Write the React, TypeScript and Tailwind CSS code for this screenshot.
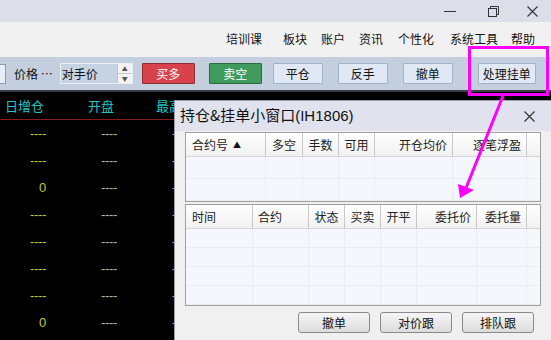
import React from 'react'

const font = { fontFamily: '"Noto Sans CJK SC", "Liberation Sans", sans-serif' }

type Col = { label: string; w: number; align: 'left' | 'right' | 'center'; arrow?: boolean }

const posCols: Col[] = [
  { label: '合约号', w: 79, align: 'left', arrow: true },
  { label: '多空', w: 37, align: 'center' },
  { label: '手数', w: 36, align: 'center' },
  { label: '可用', w: 36, align: 'center' },
  { label: '开仓均价', w: 78, align: 'right' },
  { label: '逐笔浮盈', w: 74, align: 'right' },
]

const orderCols: Col[] = [
  { label: '时间', w: 66, align: 'left' },
  { label: '合约', w: 56, align: 'left' },
  { label: '状态', w: 36, align: 'center' },
  { label: '买卖', w: 36, align: 'center' },
  { label: '开平', w: 36, align: 'center' },
  { label: '委托价', w: 60, align: 'right' },
  { label: '委托量', w: 50, align: 'right' },
]

const rows = [
  { a: '----', b: '----' },
  { a: '----', b: '----' },
  { a: '0', b: '----' },
  { a: '----', b: '----' },
  { a: '----', b: '----' },
  { a: '----', b: '----' },
  { a: '----', b: '----' },
  { a: '0', b: '----' },
]

function Grid({ cols, height, bodyRows }: { cols: Col[]; height: number; bodyRows: number }) {
  return (
    <div className="mx-[10px] border border-[#a0a0a0] bg-[#f4f8fc] flex flex-col overflow-hidden" style={{ height }}>
      <div className="flex h-[24px] shrink-0 bg-gradient-to-b from-white to-[#f1f1f1] border-b border-[#d5d5d5]">
        <div className="w-[1px]" />
        {cols.map((c) => (
          <div
            key={c.label}
            className={
              'flex items-center whitespace-nowrap px-[5px] text-[12px] text-[#222] border-r border-[#c8c8c8] ' +
              (c.align === 'left' ? 'justify-start' : c.align === 'right' ? 'justify-end' : 'justify-center')
            }
            style={{ width: c.w }}
          >
            {c.label}
            {c.arrow && <span className="ml-[5px] text-[8px] text-[#111]">▲</span>}
          </div>
        ))}
      </div>
      <div className="flex-1 flex flex-col">
        {Array.from({ length: bodyRows }).map((_, i) => (
          <div key={i} className="flex flex-1 border-b border-[#e6edf4]">
            <div className="w-[1px]" />
            {cols.map((c) => (
              <div key={c.label} className="border-r border-[#e6edf4]" style={{ width: c.w }} />
            ))}
          </div>
        ))}
      </div>
    </div>
  )
}

function ToolBtn({ label, w, cls }: { label: string; w: number; cls: string }) {
  return (
    <div
      className={'h-[21px] flex items-center justify-center text-[12px] border rounded-[1px] ' + cls}
      style={{ width: w }}
    >
      {label}
    </div>
  )
}

function DlgBtn({ label }: { label: string }) {
  return (
    <div className="w-[72px] h-[21px] flex items-center justify-center text-[12px] text-[#111] border border-[#8a8a8a] rounded-[3px] bg-gradient-to-b from-[#f6f6f6] to-[#dcdcdc]">
      {label}
    </div>
  )
}

export default function App() {
  return (
    <div className="w-[551px] h-[340px] relative overflow-hidden flex flex-col bg-black" style={font}>
      {/* title bar */}
      <div className="h-[22px] bg-[#dcdfea] flex items-center justify-end text-[#222]">
        <div className="w-[12px] h-[1px] bg-[#333] mr-[32px]" />
        <svg width="11" height="11" viewBox="0 0 11 11" className="mr-[28px]">
          <rect x="0.5" y="2.5" width="8" height="8" fill="none" stroke="#333" />
          <path d="M2.5 2.5V0.5H10.5V8.5H8.5" fill="none" stroke="#333" />
        </svg>
        <svg width="11" height="11" viewBox="0 0 11 11" className="mr-[13px]">
          <path d="M0.5 0.5L10.5 10.5M10.5 0.5L0.5 10.5" stroke="#333" strokeWidth="1.1" />
        </svg>
      </div>

      {/* menu bar */}
      <div className="h-[35px] bg-[#f1f1f1] flex items-center text-[12px] text-[#111] pb-[2px]">
        <span className="ml-[226px]">培训课</span>
        <span className="ml-[21px]">板块</span>
        <span className="ml-[14px]">账户</span>
        <span className="ml-[14px]">资讯</span>
        <span className="ml-[15px]">个性化</span>
        <span className="ml-[16px]">系统工具</span>
        <span className="ml-[13px]">帮助</span>
      </div>

      {/* toolbar */}
      <div className="h-[33px] bg-[#c3cfdf] flex items-center text-[12px] text-[#111]">
        <div className="w-[6px] h-[20px] border border-l-0 border-[#8a9ab0] bg-[#e8eef6]" />
        <span className="ml-[8px] whitespace-nowrap">价格 …</span>
        <div className="ml-[7px] w-[73px] h-[21px] flex bg-white border border-[#e8eef6]">
          <div className="flex-1 bg-[#c5d3e4] flex items-center pl-[1px] text-[12px]">对手价</div>
          <div className="w-[15px] flex flex-col border-l border-[#b8c4d2] bg-[#f3f3f3]">
            <div className="flex-1 flex items-center justify-center text-[6px] text-[#555] border-b border-[#c8c8c8]">▲</div>
            <div className="flex-1 flex items-center justify-center text-[6px] text-[#555]">▼</div>
          </div>
        </div>
        <div className="ml-[9px]">
          <ToolBtn label="买多" w={53} cls="bg-[#d8434b] text-white border-[#8e2a30]" />
        </div>
        <div className="ml-[14px]">
          <ToolBtn label="卖空" w={53} cls="bg-[#3f9a5c] text-white border-[#2a6a40]" />
        </div>
        <div className="ml-[11px]">
          <ToolBtn label="平仓" w={50} cls="bg-[#dfe8f4] text-[#111] border-[#a3b2c6]" />
        </div>
        <div className="ml-[15px]">
          <ToolBtn label="反手" w={50} cls="bg-[#dfe8f4] text-[#111] border-[#a3b2c6]" />
        </div>
        <div className="ml-[15px]">
          <ToolBtn label="撤单" w={50} cls="bg-[#dfe8f4] text-[#111] border-[#a3b2c6]" />
        </div>
        <div className="ml-[25px]">
          <ToolBtn label="处理挂单" w={58} cls="bg-[#dfe8f4] text-[#111] border-[#a3b2c6]" />
        </div>
      </div>

      {/* quote area */}
      <div className="flex-1 flex flex-col bg-black">
        <div className="h-[2px] bg-[#3b3e44]" />
        <div className="h-[28px] flex items-center text-[13px] text-[#22c4c4] border-b border-[#8c1c1c]">
          <span className="ml-[5px]">日增仓</span>
          <span className="ml-[44px]">开盘</span>
          <span className="ml-[42px]">最高</span>
        </div>
        <div className="flex flex-col">
          {rows.map((r, i) => (
            <div key={i} className="h-[27px] flex items-center text-[13px]" style={{ fontFamily: '"Liberation Sans", sans-serif' }}>
              <span className="w-[46px] text-right text-[#c8c832] tracking-[-0.3px]">{r.a}</span>
              <span className="w-[71px] text-right text-[#b4b4b4] tracking-[-0.3px]">{r.b}</span>
              <span className="w-[71px] text-right text-[#b4b4b4] tracking-[-0.3px]">{r.b}</span>
            </div>
          ))}
        </div>
      </div>

      {/* floating dialog */}
      <div className="absolute left-[174px] top-[100px] w-[377px] h-[240px] bg-[#f0f0f0] border-l border-t border-[#9aa0aa] flex flex-col">
        <div className="h-[30px] shrink-0 bg-[#e0e3ed] flex items-center justify-between pl-[5px] pr-[16px]">
          <span className="text-[15px] text-[#111]">
            持仓&挂单小窗口<span style={{ fontFamily: '"Liberation Sans", sans-serif' }}>(IH1806)</span>
          </span>
          <svg width="11" height="11" viewBox="0 0 11 11">
            <path d="M0.5 0.5L10.5 10.5M10.5 0.5L0.5 10.5" stroke="#333" strokeWidth="1.2" />
          </svg>
        </div>
        <div className="mt-[1px]">
          <Grid cols={posCols} height={70} bodyRows={2} />
        </div>
        <div className="mt-[2px]">
          <Grid cols={orderCols} height={102} bodyRows={4} />
        </div>
        <div className="flex justify-end gap-[10px] pr-[17px] mt-[6px]">
          <DlgBtn label="撤单" />
          <DlgBtn label="对价跟" />
          <DlgBtn label="排队跟" />
        </div>
      </div>

      {/* annotation */}
      <div className="absolute left-[468px] top-[46px] w-[81px] h-[50px] border-[3px] border-[#ff00ff]" />
      <svg className="absolute left-0 top-0" width="551" height="340" viewBox="0 0 551 340">
        <line x1="503" y1="96" x2="466" y2="188" stroke="#ff00ff" strokeWidth="3" />
        <polygon points="460,198 458,184 474,190" fill="#ff00ff" />
      </svg>
    </div>
  )
}
